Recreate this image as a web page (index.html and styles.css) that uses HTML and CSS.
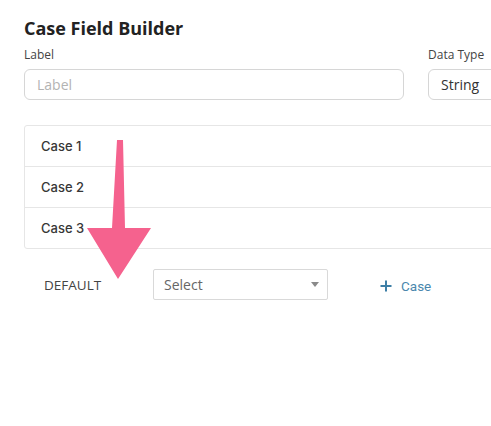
FILE: index.html
```html
<!DOCTYPE html>
<html lang="en">
<head>
<meta charset="utf-8">
<title>Case Field Builder</title>
<link rel="stylesheet" href="styles.css">
</head>
<body>
<main class="page">
  <h1 class="title">Case Field Builder</h1>
  <div class="fields">
    <div class="field field-label">
      <label class="field-name">Label</label>
      <div class="input placeholder">Label</div>
    </div>
    <div class="field field-type">
      <label class="field-name">Data Type</label>
      <div class="input">String</div>
    </div>
  </div>

  <ul class="cases">
    <li class="case">Case 1</li>
    <li class="case">Case 2</li>
    <li class="case">Case 3</li>
  </ul>

  <div class="default-row">
    <span class="default-label">DEFAULT</span>
    <div class="select">
      <span class="select-text">Select</span>
      <span class="caret"></span>
    </div>
    <button class="add-case" type="button">
      <svg class="plus" width="12" height="12" viewBox="0 0 12 12" aria-hidden="true">
        <path d="M6 0.5V11.5M0.5 6H11.5" stroke="currentColor" stroke-width="2"/>
      </svg>
      <span>Case</span>
    </button>
  </div>

  <svg class="arrow" width="491" height="300" viewBox="0 0 491 300" aria-hidden="true">
    <polygon points="117,140 123,140 125,228 151,228 118,279 87,228 112,228" fill="#f5628e"/>
  </svg>
</main>
</body>
</html>
```

FILE: styles.css
```css
* { box-sizing: border-box; }

html, body {
  margin: 0;
  padding: 0;
  background: #ffffff;
  overflow: hidden;
}

.page {
  position: relative;
  width: 100%;
  height: 426px;
  overflow: hidden;
  padding: 16px 0 0 24px;
  font-family: "Open Sans", "Noto Sans", sans-serif;
  color: #333;
}

.title {
  margin: 0;
  font-size: 18px;
  line-height: 24px;
  font-weight: 700;
  color: #222;
}

.fields {
  display: flex;
  gap: 24px;
  margin-top: 7px;
  width: 560px;
}

.field {
  display: flex;
  flex-direction: column;
  gap: 6px;
  flex: none;
}

.field-label { width: 380px; }
.field-type { width: 140px; }

.field-name {
  font-size: 12px;
  line-height: 16px;
  color: #444;
}

.input {
  height: 31px;
  border: 1px solid #d6d6d6;
  border-radius: 6px;
  padding: 0 12px;
  font-size: 14px;
  line-height: 29px;
  color: #333;
}

.input.placeholder { color: #b3b3b3; }

.cases {
  list-style: none;
  margin: 25px 0 0;
  padding: 0;
  width: 600px;
  border: 1px solid #e6e6e6;
  border-radius: 3px;
}

.case {
  height: 41px;
  padding-left: 16px;
  display: flex;
  align-items: center;
  font-family: "Inter", "Roboto", sans-serif;
  font-size: 13px;
  font-weight: 500;
  color: #373737;
  border-top: 1px solid #e6e6e6;
}

.case:first-child {
  height: 40px;
  border-top: 0;
}

.default-row {
  display: flex;
  align-items: center;
  margin-top: 20px;
  height: 31px;
}

.default-label {
  width: 129px;
  padding-left: 20px;
  font-size: 13.5px;
  color: #444;
  line-height: 31px;
  padding-top: 1px;
}

.select {
  width: 175px;
  height: 31px;
  border: 1px solid #d9d9d9;
  border-radius: 2px;
  display: flex;
  align-items: center;
  justify-content: space-between;
  padding: 0 8px 0 10px;
}

.select-text {
  font-size: 14px;
  color: #666;
}

.caret {
  width: 0;
  height: 0;
  border-left: 4.5px solid transparent;
  border-right: 4.5px solid transparent;
  border-top: 5px solid #8a8a8a;
}

.add-case {
  display: flex;
  align-items: center;
  gap: 9px;
  margin-left: 52px;
  padding: 3px 0 0;
  border: 0;
  background: none;
  font-family: "Roboto", "Liberation Sans", sans-serif;
  font-size: 13.5px;
  color: #4a87ad;
}

.plus { color: #3d7fa6; }

.arrow {
  position: absolute;
  left: 0;
  top: 0;
  pointer-events: none;
}
```
